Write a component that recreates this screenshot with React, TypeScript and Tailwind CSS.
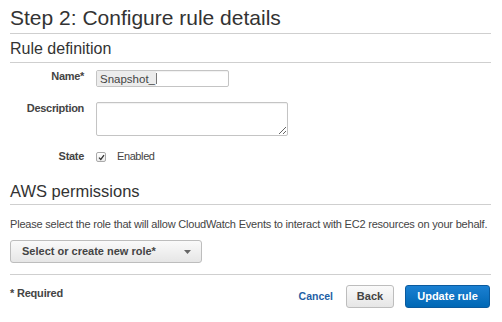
const FONT = { fontFamily: '"Liberation Sans", Arial, Helvetica, sans-serif' };

const FieldLabel = ({ children }: { children: React.ReactNode }) => (
  <div className="w-[74px] shrink-0 text-right text-[11px] font-bold leading-[13px] tracking-[-0.3px] text-[#444]">
    {children}
  </div>
);

export default function App() {
  return (
    <div style={FONT} className="h-[322px] w-[502px] overflow-hidden bg-white pl-[10px] pr-[11px] text-[#444]">
      {/* header */}
      <div className="border-b border-[#cfcfcf] pb-[5px] pt-[8px] text-[21px] leading-[20px] text-[#333]">
        Step 2: Configure rule details
      </div>
      <div className="border-b border-[#cfcfcf] pb-[6px] pt-[7px] text-[16px] leading-[15px] text-[#333]">
        Rule definition
      </div>

      {/* form */}
      <div className="mt-[7px] flex gap-[12px]">
        <FieldLabel>Name*</FieldLabel>
        <div className="flex h-[17px] w-[133px] items-center rounded-[2px] border border-[#c4c4c4] bg-white shadow-[inset_0_1px_1px_rgba(0,0,0,0.06)]">
          <span className="flex h-full items-center bg-[#ececec] pl-[3px] pr-[1px] text-[11.5px] leading-[12px] text-[#444]">
            Snapshot_
          </span>
          <span className="h-[11px] w-[3px] border-l border-[#777]" />
        </div>
      </div>

      <div className="mt-[15px] flex gap-[12px]">
        <FieldLabel>Description</FieldLabel>
        <textarea
          readOnly
          className="h-[34px] w-[192px] resize rounded-[2px] border border-[#c4c4c4] bg-white shadow-[inset_0_1px_1px_rgba(0,0,0,0.06)] outline-none"
        />
      </div>

      <div className="mt-[14px] flex gap-[12px]">
        <FieldLabel>State</FieldLabel>
        <div className="flex items-center gap-[11px]">
          <div className="mt-[1px] flex h-[10px] w-[10px] items-center justify-center rounded-[2px] border border-[#aaa] bg-gradient-to-b from-white to-[#ececec]">
            <svg width="7" height="7" viewBox="0 0 7 7">
              <path d="M1 3.6 L2.8 5.4 L6 1.2" fill="none" stroke="#333" strokeWidth="1.3" />
            </svg>
          </div>
          <span className="text-[11px] leading-[13px] tracking-[-0.4px] text-[#444]">Enabled</span>
        </div>
      </div>

      {/* permissions */}
      <div className="mt-[20px] border-b border-[#cfcfcf] pb-[4px] text-[16.5px] leading-[17px] text-[#333]">
        AWS permissions
      </div>
      <p className="mt-[13px] whitespace-nowrap text-[11px] leading-[13px] tracking-[-0.2px] text-[#444]">
        Please select the role that will allow CloudWatch Events to interact with EC2 resources on your behalf.
      </p>
      <button className="mt-[9px] flex h-[23px] w-[192px] items-center justify-between rounded-[3px] border border-[#bdbdbd] bg-gradient-to-b from-[#fafafa] to-[#e6e6e6] pl-[11px] pr-[10px] text-[11px] font-bold text-[#444]">
        <span>Select or create new role*</span>
        <svg width="7" height="4" viewBox="0 0 7 4">
          <path d="M0 0 H7 L3.5 4 Z" fill="#666" />
        </svg>
      </button>

      <div className="mt-[11px] border-t border-[#cfcfcf]" />

      {/* footer */}
      <div className="mt-[10px] flex items-start justify-between">
        <div className="pt-[2px] text-[11px] font-bold leading-[13px] tracking-[-0.2px] text-[#444]">* Required</div>
        <div className="mr-[1px] flex items-center">
          <span className="mr-[13px] text-[10.5px] font-bold text-[#1f5fa6]">Cancel</span>
          <button className="mr-[11px] h-[23px] w-[48px] rounded-[3px] border border-[#bdbdbd] bg-gradient-to-b from-[#fafafa] to-[#e6e6e6] text-[11px] font-bold text-[#444]">
            Back
          </button>
          <button className="h-[23px] w-[85px] rounded-[3px] border border-[#0a5a9e] bg-gradient-to-b from-[#1a80d2] to-[#0068b5] text-[11px] font-bold text-white">
            Update rule
          </button>
        </div>
      </div>
    </div>
  );
}
